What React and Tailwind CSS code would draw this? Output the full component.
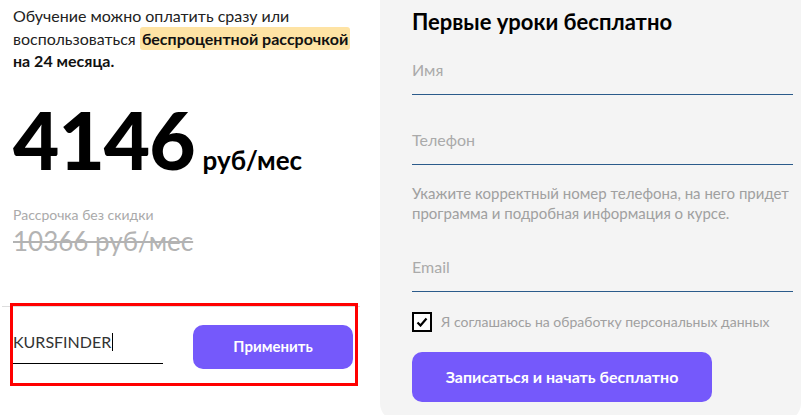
import React from "react";

export default function App() {
  const font = { fontFamily: "Lato, 'Open Sans', sans-serif" };
  return (
    <div className="flex h-[415px] w-[801px] overflow-hidden bg-white" style={font}>
      {/* Left column */}
      <div className="w-[380px] shrink-0 pl-[13px] pr-[20px]">
        <p className="pt-[5px] text-[16px] leading-[22.5px] text-[#222]">
          Обучение можно оплатить сразу или
          <br />
          воспользоваться{" "}
          <span className="rounded-[3px] bg-[#fee3a4] px-[2px] py-[2px] font-bold text-[#111]">
            беспроцентной рассрочкой
          </span>
          <br />
          <span className="font-bold text-[#111]">на 24 месяца.</span>
        </p>

        <div className="mt-[26px] flex items-baseline gap-[8px]">
          <span className="text-[80px] font-black leading-none tracking-[-1px] text-black">4146</span>
          <span className="text-[26px] font-bold leading-none text-black">руб/мес</span>
        </div>

        <div className="mt-[26px] text-[14px] leading-[20px] text-[#aaaaaa]">Рассрочка без скидки</div>
        <div className="mt-[1px] text-[26px] leading-[30px] text-[#b3b3b3] line-through decoration-[2px]">
          10366 руб/мес
        </div>

        <div className="relative mt-[50px] -ml-[11px] border-t border-[#dddddd]">
          <div className="flex items-center justify-between pl-[11px] pr-[7px] pt-[18px]">
            <div className="w-[150px] border-b border-black pb-[9px]">
              <span className="text-[16px] leading-[24px] text-[#333]">KURSFINDER</span>
              <span className="ml-[1px] inline-block h-[18px] w-[1px] translate-y-[3px] bg-black" />
            </div>
            <button className="h-[44px] w-[160px] rounded-[10px] bg-[#7559fb] text-[15px] font-bold text-white">
              Применить
            </button>
          </div>
          <div className="pointer-events-none absolute left-[8px] top-[-4px] h-[83px] w-[348px] border-[3px] border-[#ff0000]" />
        </div>
      </div>

      {/* Right panel */}
      <div className="mb-[-6px] min-w-0 flex-1 rounded-b-[18px] bg-[#f4f4f4] pl-[32px] pr-[8px]">
        <h2 className="h-[46px] pt-[7px] text-[22px] font-bold leading-[30px] text-black">
          Первые уроки бесплатно
        </h2>
        <div className="border-b border-[#2b5b8b] pb-[12px] pt-[12px] text-[16px] leading-[24px] text-[#aaaaaa]">
          Имя
        </div>
        <div className="mt-[20px] border-b border-[#2b5b8b] pb-[12px] pt-[13px] text-[16px] leading-[24px] text-[#aaaaaa]">
          Телефон
        </div>
        <p className="mt-[18px] whitespace-nowrap text-[15px] leading-[20px] text-[#a0a0a0]">
          Укажите корректный номер телефона, на него придет
          <br />
          программа и подробная информация о курсе.
        </p>
        <div className="mt-[20px] border-b border-[#2b5b8b] pb-[12px] pt-[12px] text-[16px] leading-[24px] text-[#aaaaaa]">
          Email
        </div>
        <div className="mt-[20px] flex h-[20px] items-center gap-[9px]">
          <div className="flex h-[20px] w-[20px] items-center justify-center border-[2px] border-black bg-white">
            <svg width="12" height="10" viewBox="0 0 12 10">
              <path d="M1.5 5.5 L4.5 8.5 L10.5 1.5" fill="none" stroke="black" strokeWidth="2.2" />
            </svg>
          </div>
          <span className="text-[14px] leading-[20px] text-[#a0a0a0]">
            Я соглашаюсь на обработку персональных данных
          </span>
        </div>
        <button className="mt-[20px] h-[50px] w-[300px] rounded-[10px] bg-[#7559fb] text-[16px] font-bold text-white">
          Записаться и начать бесплатно
        </button>
      </div>
    </div>
  );
}
